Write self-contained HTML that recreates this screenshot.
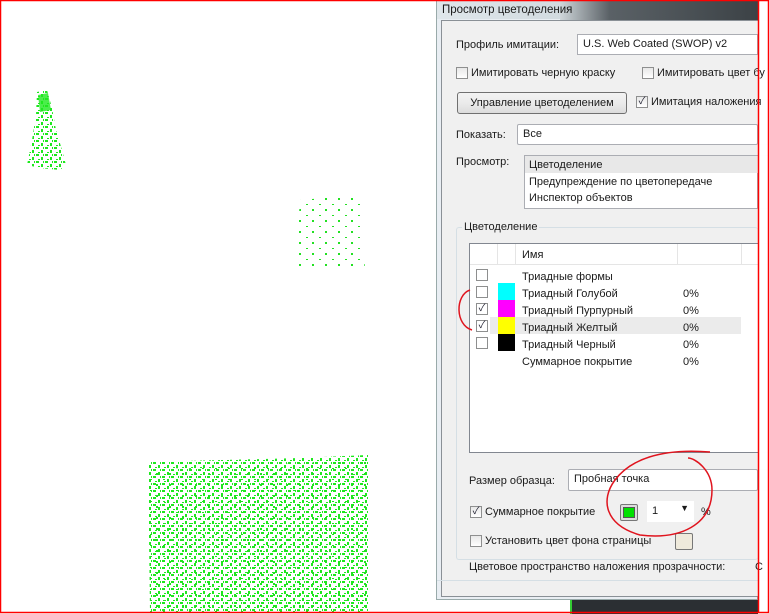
<!DOCTYPE html>
<html><head><meta charset="utf-8"><style>
*{margin:0;padding:0;box-sizing:border-box}
body{width:769px;height:614px;position:relative;overflow:hidden;background:#fff;font-family:"Liberation Sans","Noto Sans CJK SC",sans-serif;font-size:11px;color:#1a1a1a}
.a{position:absolute}
.cb{position:absolute;width:12px;height:12px;border:1px solid #8e8f8f;background:linear-gradient(#e8e8e8,#fff);font-size:10px;line-height:10px;text-align:center;color:#223}
.inp{position:absolute;background:#fff;border:1px solid #abadb3;padding:3px 5px}
</style></head><body>
<svg class="a" style="left:0;top:0" width="436" height="614">
<defs>
<pattern id="p" width="9" height="7" patternUnits="userSpaceOnUse">
<rect x="0" y="0" width="3" height="2" fill="#1ee81e"/><rect x="5" y="3" width="2" height="3" fill="#1ee81e"/><rect x="2" y="5" width="2" height="1" fill="#1ee81e"/><rect x="7" y="0" width="1" height="2" fill="#1ee81e"/>
</pattern>
<pattern id="q" width="13" height="11" patternUnits="userSpaceOnUse">
<rect x="0" y="0" width="2" height="2" fill="#22e022"/><rect x="7" y="6" width="2" height="1" fill="#22e022"/>
</pattern>
</defs>
<path d="M37 92 L47 90 L52 108 L56 130 L62 150 L66 165 L60 170 L40 168 L27 165 L32 140 L36 115Z" fill="url(#p)"/>
<path d="M38 95 L48 93 L51 110 L40 112Z" fill="#1ee81e" opacity=".8"/>
<path d="M300 200 L360 195 L365 270 L295 268Z" fill="url(#q)"/>
<path d="M148 462 L300 458 L368 455 L368 612 L150 612Z" fill="url(#p)"/>
<path d="M150 470 L368 460 L368 612 L150 612Z" fill="url(#q)"/>
</svg>
<!-- dialog -->
<div class="a" style="left:436px;top:0;width:322px;height:600px;background:#e9eef3;border:1px solid #9aa;"></div>
<div class="a" style="left:437px;top:0;width:150px;height:19px;background:linear-gradient(90deg,#dfe6ea,#cfd8de)"></div>
<div class="a" style="left:560px;top:0;width:198px;height:22px;background:linear-gradient(90deg,#cfd6da,#5a6166 25%,#3c4246)"></div>
<div class="a" style="left:442px;top:4px;font-size:11.5px">Просмотр цветоделения</div>
<div class="a" style="left:441px;top:20px;width:317px;height:577px;background:#f0f0f0;border:1px solid #8a9096;border-right:none"></div>
<div class="a" style="left:456px;top:39px">Профиль имитации:</div>
<div class="inp" style="left:577px;top:34px;width:181px;height:21px">U.S. Web Coated (SWOP) v2</div>
<div class="cb" style="left:456px;top:67px"></div><div class="a" style="left:471px;top:67px">Имитировать черную краску</div>
<div class="cb" style="left:642px;top:67px"></div><div class="a" style="left:657px;top:67px;white-space:nowrap">Имитировать цвет бу</div>
<div class="a" style="left:457px;top:92px;width:170px;height:22px;border:1px solid #707070;border-radius:3px;background:linear-gradient(#f2f2f2,#ebebeb 50%,#dcdcdc);text-align:center;line-height:20px">Управление цветоделением</div>
<div class="cb" style="left:636px;top:96px">✓</div><div class="a" style="left:651px;top:96px;white-space:nowrap">Имитация наложения</div>
<div class="a" style="left:456px;top:129px">Показать:</div>
<div class="inp" style="left:517px;top:124px;width:241px;height:21px;border-radius:2px">Все</div>
<div class="a" style="left:456px;top:156px">Просмотр:</div>
<div class="a" style="left:524px;top:155px;width:234px;height:54px;background:#fff;border:1px solid #abadb3"></div>
<div class="a" style="left:525px;top:156px;width:233px;height:17px;background:#e8e8e8"></div>
<div class="a" style="left:529px;top:159px">Цветоделение</div>
<div class="a" style="left:529px;top:176px">Предупреждение по цветопередаче</div>
<div class="a" style="left:529px;top:192px">Инспектор объектов</div>
<div class="a" style="left:456px;top:227px;width:302px;height:333px;border:1px solid #d5dfe5;border-right:none;border-radius:3px"></div>
<div class="a" style="left:462px;top:221px;background:#f0f0f0;padding:0 2px">Цветоделение</div>
<div class="a" style="left:469px;top:243px;width:289px;height:210px;background:#fff;border:1px solid #828790;border-right:none"></div>
<div class="a" style="left:470px;top:244px;width:288px;height:21px;border-bottom:1px solid #e5e5e5"></div>
<div class="a" style="left:497px;top:244px;width:1px;height:21px;background:#e5e5e5"></div>
<div class="a" style="left:515px;top:244px;width:1px;height:21px;background:#e5e5e5"></div>
<div class="a" style="left:677px;top:244px;width:1px;height:21px;background:#e5e5e5"></div>
<div class="a" style="left:741px;top:244px;width:1px;height:21px;background:#e5e5e5"></div>
<div class="a" style="left:522px;top:249px">Имя</div>
<div class="a" style="left:490px;top:317px;width:251px;height:17px;background:#ebebeb"></div>
<div class="cb" style="left:476px;top:269px;background:#fff"></div>
<div class="cb" style="left:476px;top:286px;background:#fff"></div>
<div class="cb" style="left:476px;top:303px;background:#fff">✓</div>
<div class="cb" style="left:476px;top:320px;background:#fff">✓</div>
<div class="cb" style="left:476px;top:337px;background:#fff"></div>
<div class="a" style="left:498px;top:283px;width:17px;height:17px;background:#0ff"></div>
<div class="a" style="left:498px;top:300px;width:17px;height:17px;background:#f0f"></div>
<div class="a" style="left:498px;top:317px;width:17px;height:17px;background:#ff0"></div>
<div class="a" style="left:498px;top:334px;width:17px;height:17px;background:#000"></div>
<div class="a" style="left:522px;top:269px;line-height:17px">Триадные формы<br>Триадный Голубой<br>Триадный Пурпурный<br>Триадный Желтый<br>Триадный Черный<br>Суммарное покрытие</div>
<div class="a" style="left:683px;top:286px;line-height:17px">0%<br>0%<br>0%<br>0%<br>0%</div>
<div class="a" style="left:469px;top:475px">Размер образца:</div>
<div class="inp" style="left:568px;top:469px;width:190px;height:22px;border-radius:2px">Пробная точка</div>
<div class="cb" style="left:470px;top:506px">✓</div><div class="a" style="left:485px;top:506px">Суммарное покрытие</div>
<div class="a" style="left:620px;top:504px;width:18px;height:17px;border:1px solid #777;border-radius:2px;background:#ddd;padding:2px"><div style="width:12px;height:11px;background:#00e000;border:1px solid #555"></div></div>
<div class="a" style="left:647px;top:501px;width:47px;height:21px;background:#fff;padding:4px 5px">1<span style="position:absolute;right:5px;top:2px;font-size:9px">▼</span></div>
<div class="a" style="left:701px;top:506px">%</div>
<div class="cb" style="left:470px;top:535px"></div><div class="a" style="left:485px;top:535px">Установить цвет фона страницы</div>
<div class="a" style="left:675px;top:533px;width:18px;height:17px;border:1px solid #777;border-radius:2px;background:#efeadc"></div>
<div class="a" style="left:469px;top:561px">Цветовое пространство наложения прозрачности:</div>
<div class="a" style="left:755px;top:561px">С</div>
<div class="a" style="left:437px;top:580px;width:321px;height:1px;background:#d5dfe5"></div>
<div class="a" style="left:570px;top:600px;width:188px;height:14px;background:#2b2f33;border-left:2px solid #3c3"></div>
<!-- annotations -->
<svg class="a" style="left:0;top:0" width="769" height="614">
<path d="M470 290 C455 295 455 325 472 330" fill="none" stroke="#e0141e" stroke-width="1.5"/>
<path d="M710 452 C660 448 630 460 615 480 C600 500 605 525 640 535 C680 540 712 525 712 490 C712 470 695 458 688 458" fill="none" stroke="#e0141e" stroke-width="1.5"/>
<rect x="0.5" y="0.5" width="768" height="612" fill="none" stroke="#f00" stroke-width="1.5"/>
<line x1="758.5" y1="0" x2="758.5" y2="613" stroke="#f00" stroke-width="1.5"/>
</svg>
</body></html>
